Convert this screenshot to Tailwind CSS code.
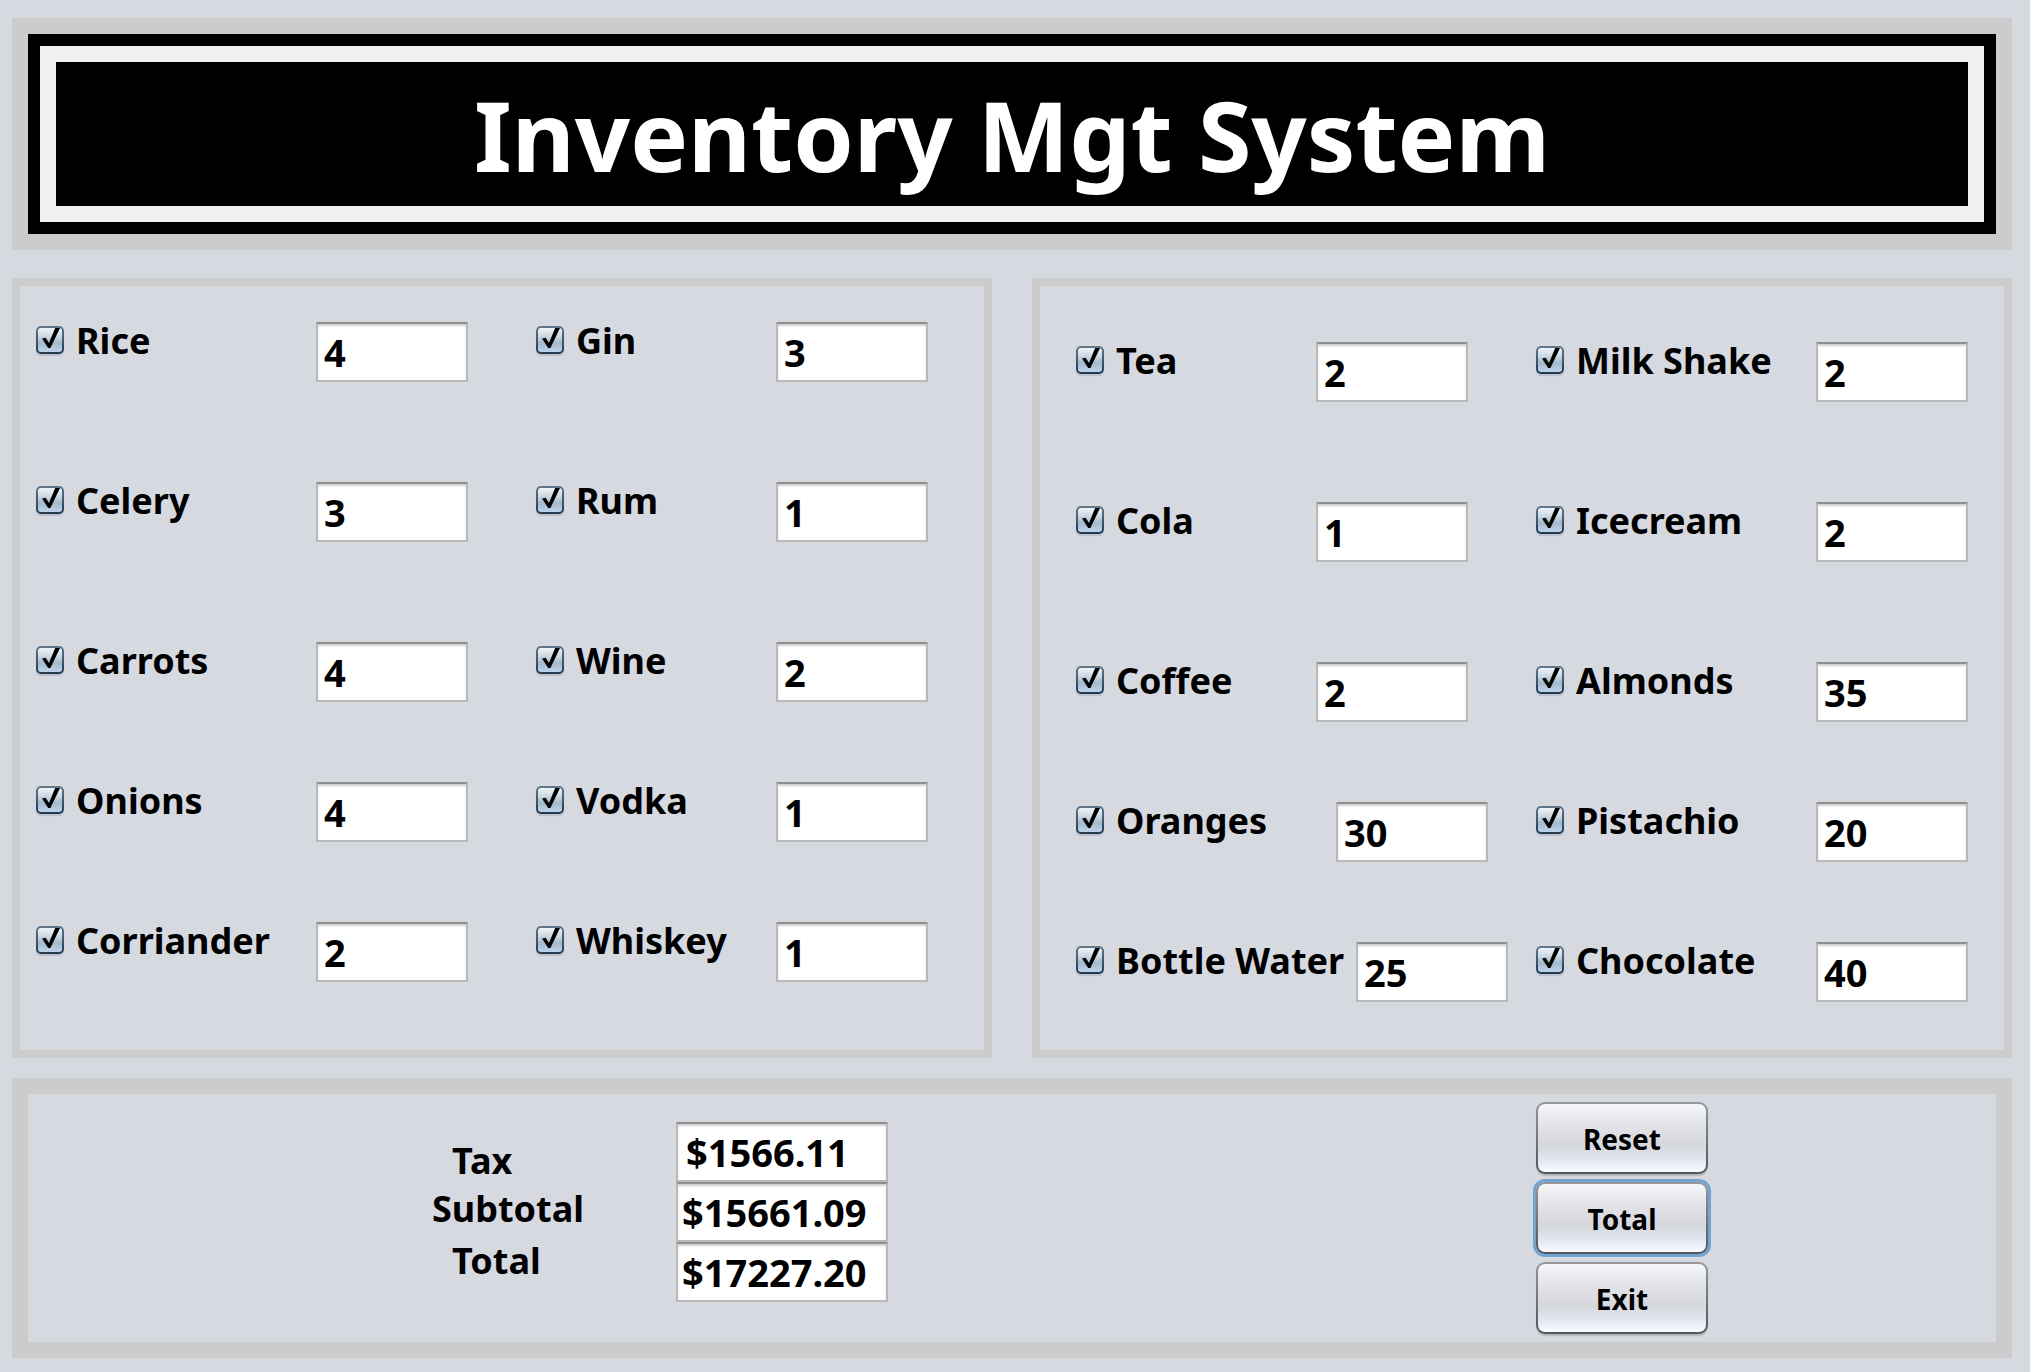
<!DOCTYPE html>
<html lang="en">
<head>
<meta charset="utf-8">
<meta name="viewport" content="width=device-width, initial-scale=1">
<title>Inventory Mgt System</title>
<script src="https://cdn.jsdelivr.net/npm/@tailwindcss/browser@4"></script>
</head>
<body class="min-h-screen bg-[#d6d9e0] pt-[18px] pr-[18px] pb-3.5 pl-3 font-['Noto_Sans',sans-serif] text-[36px] leading-[48px] font-bold text-black">

<header class="border-16 border-[#cccccc]">
  <div class="border-12 border-black bg-[#f0f0f0] p-4">
    <h1 class="bg-black text-center text-[97px] leading-[144px] text-white">Inventory Mgt System</h1>
  </div>
</header>

<main>
  <div class="mt-7 grid grid-cols-2 gap-10">
    <section id="groceries" aria-label="Groceries and spirits" class="grid grid-cols-[minmax(0,280fr)_minmax(0,220fr)_minmax(0,240fr)_minmax(0,152fr)] grid-rows-[160px_160px_140px_140px_60px] border-8 border-[#cccccc] pt-9 pr-14 pb-[68px] pl-4"></section>
    <section id="drinks" aria-label="Drinks and snacks" class="grid grid-cols-[minmax(0,240fr)_minmax(0,220fr)_minmax(0,280fr)_minmax(0,152fr)] grid-rows-[160px_160px_140px_140px_60px] border-8 border-[#cccccc] px-9 pt-14 pb-12"></section>
  </div>

  <section aria-label="Totals" class="mt-5 grid grid-cols-[404fr_244fr_860fr_460fr] border-16 border-[#cccccc] py-2">
    <div class="col-start-2 flex flex-col pt-[35px]">
      <label for="tax" class="pl-5">Tax</label>
      <label for="subtotal">Subtotal</label>
      <label for="total" class="mt-1 pl-5">Total</label>
    </div>
    <div class="flex flex-col pt-5 text-[38px]">
      <input id="tax" type="text" value="$1566.11" class="h-[60px] w-[212px] border-2 border-[#b9b9b9] border-t-[#8f8f8f] bg-white pl-2 inset-shadow-[0_2px_2px_#d0d0d0]">
      <input id="subtotal" type="text" value="$15661.09" class="h-[60px] w-[212px] border-2 border-[#b9b9b9] border-t-[#8f8f8f] bg-white pl-1 inset-shadow-[0_2px_2px_#d0d0d0]">
      <input id="total" type="text" value="$17227.20" class="h-[60px] w-[212px] border-2 border-[#b9b9b9] border-t-[#8f8f8f] bg-white pl-1 inset-shadow-[0_2px_2px_#d0d0d0]">
    </div>
    <div class="flex flex-col gap-2 text-[28px]">
      <button type="button" class="h-[72px] w-[172px] rounded-[9px] border-2 border-transparent pt-0.5 shadow-[0_2px_1px_#b4b7bd] [background:linear-gradient(#f6f7f9,#e3e4e8_30%,#d5d7dd_62%,#e4e8f3_84%,#fafbff)_padding-box,linear-gradient(#94979c,#53565d)_border-box]">Reset</button>
      <button type="button" class="h-[72px] w-[172px] rounded-[9px] border-2 border-transparent pt-0.5 shadow-[0_0_0_3px_#73a4d1] [background:linear-gradient(#f6f7f9,#e3e4e8_30%,#d5d7dd_62%,#e4e8f3_84%,#fafbff)_padding-box,linear-gradient(#94979c,#53565d)_border-box]">Total</button>
      <button type="button" class="h-[72px] w-[172px] rounded-[9px] border-2 border-transparent pt-0.5 shadow-[0_2px_1px_#b4b7bd] [background:linear-gradient(#f6f7f9,#e3e4e8_30%,#d5d7dd_62%,#e4e8f3_84%,#fafbff)_padding-box,linear-gradient(#94979c,#53565d)_border-box]">Exit</button>
    </div>
  </section>
</main>

<script>
  const groceries = [
    ["Rice", 4], ["Gin", 3],
    ["Celery", 3], ["Rum", 1],
    ["Carrots", 4], ["Wine", 2],
    ["Onions", 4], ["Vodka", 1],
    ["Corriander", 2], ["Whiskey", 1],
  ];
  const drinks = [
    ["Tea", 2], ["Milk Shake", 2],
    ["Cola", 1], ["Icecream", 2],
    ["Coffee", 2], ["Almonds", 35],
    ["Oranges", 30, "ml-5"], ["Pistachio", 20],
    ["Bottle Water", 25, "ml-10"], ["Chocolate", 40],
  ];

  const item = ([name, qty, indent = ""]) => `
    <label class="flex h-9 items-center gap-3 self-start whitespace-nowrap">
      <span class="relative size-7 shrink-0">
        <input type="checkbox" checked class="peer block size-7 appearance-none rounded-[5px] border-2 border-transparent shadow-[0_2px_1px_#bbbfca] [background:linear-gradient(#f1f4f7,#cbd7e1_35%,#a4b9cc_62%,#bcd3ea)_padding-box,linear-gradient(#62798f,#22384f)_border-box]">
        <svg viewBox="0 0 28 28" aria-hidden="true" class="pointer-events-none absolute inset-0 hidden size-7 peer-checked:block"><path d="M6 12.5 9.6 11.8 13 17 19.2 2H24L14.4 22H12.2Z"/></svg>
      </span>
      <span class="pt-0.5">${name}</span>
    </label>
    <input type="text" value="${qty}" aria-label="${name} quantity" class="h-[60px] w-[152px] border-2 border-[#b9b9b9] border-t-[#8f8f8f] bg-white pl-1.5 text-[38px] inset-shadow-[0_2px_2px_#d0d0d0] ${indent}">`;

  document.getElementById("groceries").innerHTML = groceries.map(item).join("");
  document.getElementById("drinks").innerHTML = drinks.map(item).join("");
</script>
</body>
</html>
